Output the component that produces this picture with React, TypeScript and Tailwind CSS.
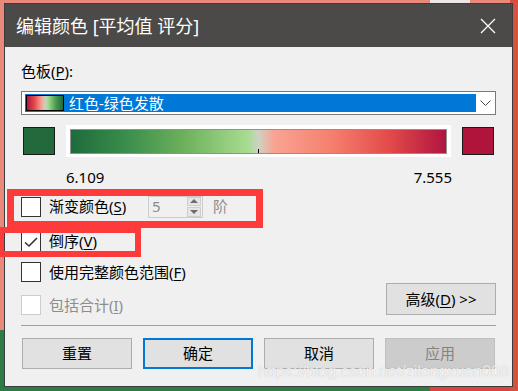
import React from "react";

const FONT = { fontFamily: '"Noto Sans", "Noto Sans CJK SC", sans-serif' };

function U({ c }: { c: string }) {
  return <span className="underline underline-offset-2 decoration-1">{c}</span>;
}

function Box({ checked, disabled }: { checked?: boolean; disabled?: boolean }) {
  return (
    <div
      className={
        "w-[20px] h-[20px] bg-white border flex items-center justify-center shrink-0 " +
        (disabled ? "border-[#cccccc]" : "border-[#333333]")
      }
    >
      {checked && (
        <svg width="18" height="18" viewBox="0 0 18 18">
          <path d="M3 9.5 L7 13 L15 5" fill="none" stroke="#333" strokeWidth="1.6" />
        </svg>
      )}
    </div>
  );
}

function Btn({ label, kind }: { label: React.ReactNode; kind?: "primary" | "disabled" }) {
  const cls =
    kind === "primary"
      ? "border-2 border-[#0078d7] bg-[#e1e1e1] text-black"
      : kind === "disabled"
      ? "border border-[#bfbfbf] bg-[#cccccc] text-[#838383]"
      : "border border-[#adadad] bg-[#e1e1e1] text-black";
  return (
    <div className={"w-[110px] h-[31px] flex items-center justify-center text-[15px] " + cls}>
      {label}
    </div>
  );
}

export default function App() {
  return (
    <div className="relative w-[518px] h-[391px] overflow-hidden bg-[#e8897b]" style={FONT}>
      {/* desktop behind */}
      <div className="absolute left-0 top-[330px] w-[430px] h-[61px] bg-[#2e7b45]" />
      <div className="absolute left-[430px] top-[330px] right-0 bottom-0 bg-[#d9453e]" />
      <div className="absolute right-0 top-0 w-[8px] h-[391px] bg-[#d9503f]" />
      <div className="absolute left-[430px] top-0 w-[40px] h-[3px] bg-[#ece6e4]" />

      <div className="relative pl-[4px] pt-[3px]">
        <div className="w-[509px] h-[384px] border border-[#3c3c3c] bg-[#f0f0f0] flex flex-col">
          {/* title bar */}
          <div className="h-[43px] bg-[#4b4a48] flex items-center justify-between pl-[11px] pr-[16px]">
            <span className="text-[18px] text-white leading-none">编辑颜色 [平均值 评分]</span>
            <svg width="16" height="16" viewBox="0 0 16 16">
              <path d="M1 1 L15 15 M15 1 L1 15" stroke="#ffffff" strokeWidth="1.3" />
            </svg>
          </div>

          <div className="flex flex-col pl-[16px] pr-[15px] pt-[14px] text-[15px] text-black">
            <div className="h-[20px] leading-[20px]">
              色板(<U c="P" />):
            </div>

            {/* select */}
            <div className="mt-[10px] h-[24px] w-[475px] bg-white border border-[#7a7a7a] flex items-center pl-[3px] pr-[1px]">
              <div className="h-[18px] w-[451px] bg-[#0078d7] flex items-center pl-[1px]">
                <div
                  className="w-[38px] h-[16px] border border-black"
                  style={{
                    background:
                      "linear-gradient(to right, #b01540 0%, #e04848 20%, #f9a08e 40%, #c8d0c0 50%, #a6dc90 58%, #4a9a52 80%, #1e6b3c 100%)",
                  }}
                />
                <span className="ml-[5px] text-white leading-none">红色-绿色发散</span>
              </div>
              <div className="flex-1 flex items-center justify-center">
                <svg width="11" height="7" viewBox="0 0 11 7">
                  <path d="M0.5 0.5 L5.5 5.5 L10.5 0.5" fill="none" stroke="#444" strokeWidth="1" />
                </svg>
              </div>
            </div>

            {/* gradient row */}
            <div className="mt-[10px] h-[32px] flex items-center">
              <div className="ml-[2px] w-[32px] h-[28px] bg-[#226a3c] border border-[#1a1a1a]" />
              <div className="ml-[11px] w-[385px] h-[32px] bg-white p-[4px] pb-[3px]">
                <div
                  className="relative w-full h-full border border-[#909090]"
                  style={{
                    background:
                      "linear-gradient(to right, #1e6b3c 0%, #3b8e4c 15%, #6db05c 30%, #a6dc90 47%, #cdd3c2 50%, #f9a494 54%, #f57e6c 70%, #e24a4a 85%, #b01540 100%)",
                  }}
                >
                  <div className="absolute left-[187px] bottom-0 w-px h-[4px] bg-black" />
                </div>
              </div>
              <div className="ml-[11px] w-[32px] h-[28px] bg-[#b0143a] border border-[#1a1a1a]" />
            </div>

            {/* labels */}
            <div className="mt-[10px] h-[20px] flex items-center justify-between pl-[45px] pr-[45px] leading-none">
              <span>6.109</span>
              <span>7.555</span>
            </div>

            {/* row 1 */}
            <div className="mt-[6px] h-[27px] flex items-center">
              <Box />
              <span className="ml-[8px] w-[99px] whitespace-nowrap">
                渐变颜色(<U c="S" />)
              </span>
              <div className="w-[55px] h-[22px] border border-[#cccccc] bg-[#f0f0f0] flex items-center">
                <span className="ml-[3px] flex-1 text-[#8a8a8a]">5</span>
                <div className="w-[14px] h-[20px] mr-[1px] flex flex-col gap-px">
                  <div className="flex-1 bg-[#e6e6e6] border border-[#cfcfcf] flex items-center justify-center">
                    <svg width="8" height="4" viewBox="0 0 8 4">
                      <path d="M0 4 L4 0 L8 4 Z" fill="#6d6d6d" />
                    </svg>
                  </div>
                  <div className="flex-1 bg-[#e6e6e6] border border-[#cfcfcf] flex items-center justify-center">
                    <svg width="8" height="4" viewBox="0 0 8 4">
                      <path d="M0 0 L4 4 L8 0 Z" fill="#6d6d6d" />
                    </svg>
                  </div>
                </div>
              </div>
              <span className="ml-[10px] text-[#8d8d8d]">阶</span>
            </div>

            {/* row 2 */}
            <div className="mt-[8px] h-[27px] flex items-center">
              <Box checked />
              <span className="ml-[8px]">
                倒序(<U c="V" />)
              </span>
            </div>

            {/* row 3 */}
            <div className="mt-[6px] h-[22px] flex items-center">
              <Box />
              <span className="ml-[8px]">
                使用完整颜色范围(<U c="F" />)
              </span>
            </div>

            {/* row 4 */}
            <div className="h-[33px] flex items-end justify-between">
              <div className="h-[22px] flex items-center">
                <Box disabled />
                <span className="ml-[8px] text-[#8d8d8d]">
                  包括合计(<U c="I" />)
                </span>
              </div>
              <div className="mb-[1px] mr-[1px] w-[110px] h-[32px] border border-[#adadad] bg-[#e1e1e1] flex items-center justify-center">
                高级(<U c="D" />) &gt;&gt;
              </div>
            </div>

            <div className="mt-[9px] h-px w-[475px] bg-[#a0a0a0]" />

            <div className="mt-[12px] ml-[1px] flex gap-[11px]">
              <Btn label="重置" />
              <Btn label="确定" kind="primary" />
              <Btn label="取消" />
              <Btn label="应用" kind="disabled" />
            </div>
          </div>
        </div>
      </div>

      {/* annotation boxes */}
      <div className="absolute left-[7px] top-[189px] w-[256px] h-[39px] border-[7px] border-[#fd3b3b]" />
      <div className="absolute left-[-2px] top-[227px] w-[143px] h-[30px] border-[6px] border-[#fd3b3b]" />

      {/* watermark */}
      <div
        className="absolute left-[258px] top-[360px] text-[16px] text-white/80 whitespace-nowrap"
        style={{ fontFamily: '"Liberation Sans", Arial, sans-serif', textShadow: "0 0 1px rgba(0,0,0,0.25)" }}
      >
        https://blog.csdn.net/zilongxuan008
      </div>
    </div>
  );
}
